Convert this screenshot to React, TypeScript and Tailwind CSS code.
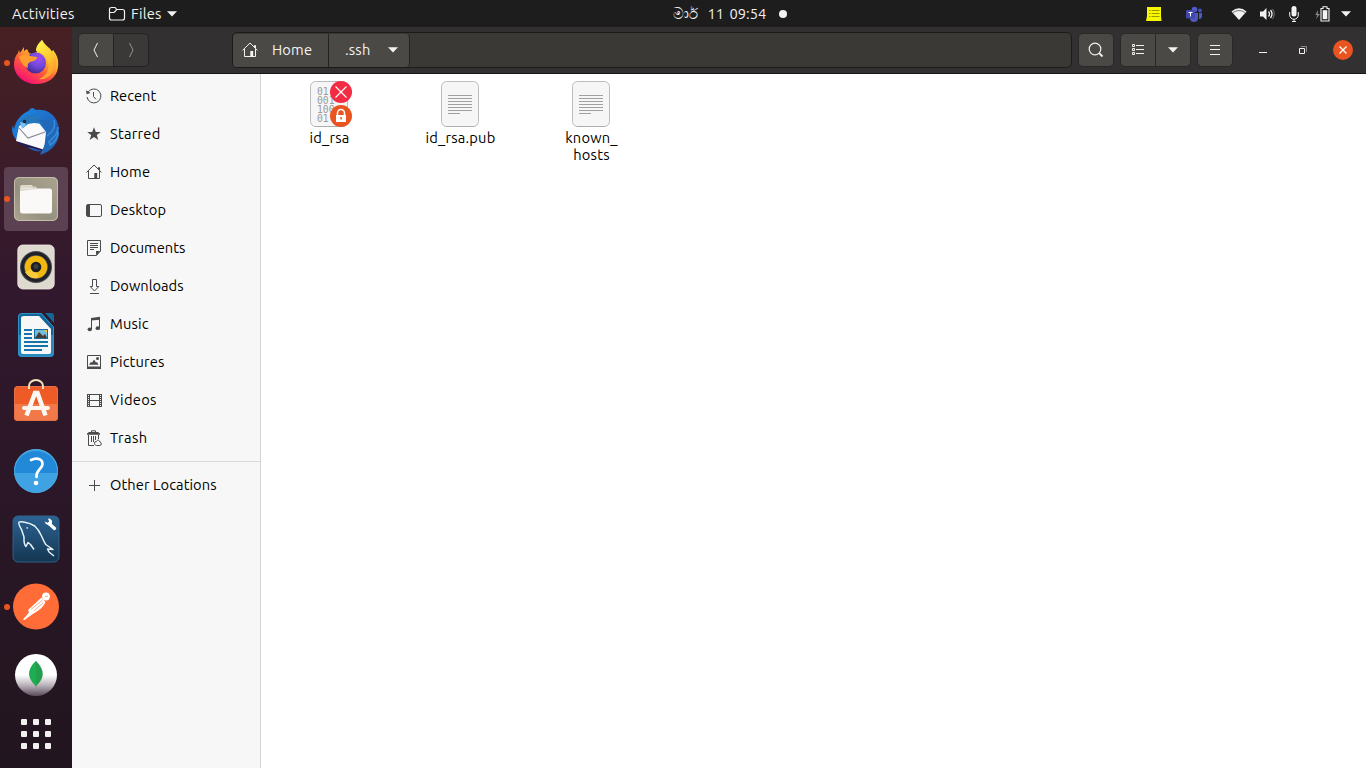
import type { ReactNode } from "react";

type IconProps = { children: ReactNode; size?: number; className?: string };

const Sym = ({ children, size = 16, className = "" }: IconProps) => (
  <svg width={size} height={size} viewBox="0 0 16 16" fill="none" stroke="currentColor" className={`block shrink-0 ${className}`}>
    {children}
  </svg>
);

const Caret = ({ className = "" }: { className?: string }) => (
  <svg width="10" height="6" viewBox="0 0 10 6" fill="currentColor" className={`block shrink-0 ${className}`}>
    <path d="M0 0.3H10L5 5.6Z" />
  </svg>
);

const HomeIcon = () => (
  <Sym>
    <path d="M0.5 8.4 8 1l7.5 7.4M2.5 7v7.5h11V7M12.5 5V3.5h1V6" />
    <path d="M8.3 9h2.9v5.5H8.3z" fill="currentColor" stroke="none" />
  </Sym>
);

const PLACES: { label: string; tracking?: string; icon: ReactNode }[] = [
  {
    label: "Recent",
    icon: (
      <Sym>
        <path d="M2 4.2A7 7 0 1 1 1 9M7.5 4v4.6l2.5 2.6" />
        <path d="M0 2.3 .6 6.2 4.6 5Z" fill="currentColor" stroke="none" />
      </Sym>
    ),
  },
  {
    label: "Starred",
    tracking: "tracking-[0.25px]",
    icon: (
      <Sym>
        <path d="M8 1.2l1.800 4.800h5L10.800 9l1.500 4.900L8 11l-4.300 2.900L5.200 9l-4-3h5z" fill="currentColor" stroke="none" />
      </Sym>
    ),
  },
  { label: "Home", tracking: "tracking-[0.15px]", icon: <HomeIcon /> },
  {
    label: "Desktop",
    tracking: "tracking-[0.15px]",
    icon: (
      <Sym>
        <rect x="0.5" y="2.500" width="15" height="12" rx="1.500" />
        <path d="M1 3h3v11H1z" fill="currentColor" stroke="none" />
      </Sym>
    ),
  },
  {
    label: "Documents",
    icon: (
      <Sym>
        <path d="M1.500 .5h13v10.500l-4 4.500h-9zM4 3.500h8M4 5.500h8M4 7.500h8M4 9.500h4" />
        <path d="M14.500 11h-4.500v4.500z" fill="currentColor" stroke="none" />
      </Sym>
    ),
  },
  {
    label: "Downloads",
    icon: (
      <Sym>
        <path d="M6.500 1.500h4v7h2.300L8.500 13 4.200 8.500h2.300zM4 15.500h9" />
      </Sym>
    ),
  },
  {
    label: "Music",
    tracking: "tracking-[0.2px]",
    icon: (
      <Sym>
        <path d="M5.500 13V3M13.500 12V2" />
        <path d="M5 2 14 .8v3L5 4.600z" fill="currentColor" stroke="none" />
        <ellipse cx="3.800" cy="13.300" rx="2.200" ry="1.900" fill="currentColor" stroke="none" />
        <ellipse cx="11.800" cy="12.200" rx="2.200" ry="1.900" fill="currentColor" stroke="none" />
      </Sym>
    ),
  },
  {
    label: "Pictures",
    tracking: "tracking-[0.15px]",
    icon: (
      <Sym>
        <path d="M1.500 1.500h13v13h-13z" />
        <path d="M1 12.500h14V15H1zM3 10.800l2-3 1 1 2-3.300 2 3 1-.5 1.500 2.800z" fill="currentColor" stroke="none" />
        <circle cx="11.500" cy="4.500" r="1.500" fill="currentColor" stroke="none" />
      </Sym>
    ),
  },
  {
    label: "Videos",
    tracking: "tracking-[0.3px]",
    icon: (
      <Sym>
        <path d="M3.500 2.500h10M3.500 14.500h10M3.500 8.500h10M3.500 2v13M13.500 2v13M1.500 2v13M15.500 2v13" />
        <path d="M2.500 2v13M14.500 2v13" strokeDasharray="1 1" />
      </Sym>
    ),
  },
  {
    label: "Trash",
    tracking: "tracking-[0.4px]",
    icon: (
      <Sym>
        <path d="M5.500 2V.8h4V2M2.500 5v10.500H8M5.500 6v6M7.500 6v6M9.500 6v4M12.500 5v4" />
        <path d="M1 4.800V3.500L3 2h9l2 1.500v1.300z" fill="currentColor" stroke="none" />
        <path d="M8.500 13a1.500 1.500 0 0 1 1.800-1.400C11 9.500 14 10 13.800 12c2 .2 2 3.500 0 3.500H10.500C9 15.500 8.500 14 8.500 13z" />
      </Sym>
    ),
  },
];

const Firefox = () => (
  <svg width="48" height="48" viewBox="0 0 48 48" className="mb-[2px]">
    <defs>
      <linearGradient id="ffb" x1=".85" y1=".1" x2=".3" y2="1">
        <stop offset="0" stopColor="#ffe94f" />
        <stop offset=".38" stopColor="#ffab2a" />
        <stop offset=".62" stopColor="#ff5b38" />
        <stop offset="1" stopColor="#f60d78" />
      </linearGradient>
      <radialGradient id="ffg" cx=".65" cy=".3" r=".75">
        <stop offset="0" stopColor="#a44af5" />
        <stop offset=".5" stopColor="#7049dc" />
        <stop offset="1" stopColor="#45278d" />
      </radialGradient>
      <linearGradient id="ffy" x1=".2" y1="0" x2=".8" y2="1">
        <stop offset="0" stopColor="#fff44f" />
        <stop offset=".55" stopColor="#ffc62f" />
        <stop offset="1" stopColor="#ff8a35" />
      </linearGradient>
    </defs>
    <path d="M30 2c2 4 5 6 8 9l2 3 1-2c4 5 6 10 5 17-1 11-11 17-22 17S2 38 2 27c0-5 1-9 4-12l1-3 1 3 4-6v4l3-2 2 4 3 1c2-1 4-2 5-2-1-5 2-9 5-12z" fill="url(#ffb)" />
    <circle cx="23.500" cy="25" r="10.500" fill="url(#ffg)" />
    <path d="M30 2c2 4 5 6 8 9l2 3 1-2c4 7 5 15 1 21-4 6-10 9-15 8 9-3 12-13 8-20-2-4-6-7-11-8 0-5 3-8 6-11z" fill="url(#ffy)" />
    <path d="M7 19c4-3 9-3 11-1l7 1c0 3-3 4-7 5-2 1-3 3-2 6-5-2-7-6-9-11z" fill="#ff9e2f" />
  </svg>
);

const Thunderbird = () => (
  <svg width="50" height="50" viewBox="0 0 50 50" className="mt-px">
    <defs>
      <linearGradient id="tb" x1="0" y1="0" x2="1" y2="1">
        <stop offset="0" stopColor="#198ee8" />
        <stop offset=".55" stopColor="#2169c3" />
        <stop offset="1" stopColor="#20479e" />
      </linearGradient>
    </defs>
    <path d="M19 3l-1-1 4-1 3 2C40 1 49 13 48 26c0 10-8 19-19 22l2-4c-7 1-11-1-16-5l5 1C7 38 1 30 1 22l1-4 1 5c1-9 7-16 16-20z" fill="url(#tb)" />
    <path d="M4 32c3 6 10 9 17 9l14 4-6-9z" fill="#241c50" />
    <path d="M8 19 16 15 28 16 35 25 34 43 5 34z" fill="#fafafc" />
    <path d="M8 21l9 10 17-6" fill="none" stroke="#88858e" strokeWidth="1.100" />
    <path d="M7 16c3-5 8-8 14-8 6 0 10 5 16 6l-5 3-9-1-6 1-5 4c-1-3-2-4-5-5z" fill="#2678bd" />
    <path d="M9 15l5 1 1 2-4 4z" fill="#77c3ee" />
    <path d="M24 13c8 1 11 7 11 14-1 8-1 13-6 20 10-2 18-10 19-21C46 17 35 10 24 13z" fill="#2268b9" />
    <path d="M47 20c-1 9-4 9-9 15l1 3c5-3 8-8 8-13M43 13c2 8-2 12-7 16" fill="none" stroke="#368fdd" strokeWidth="1.500" />
    <circle cx="13.500" cy="14.500" r="1.800" fill="#152b45" />
  </svg>
);

const FilesIcon = () => (
  <svg width="46" height="46" viewBox="0 0 46 46">
    <defs><linearGradient id="fl" x1="1" y1="0" x2="0" y2="1"><stop stopColor="#aaa48e" /><stop offset=".6" stopColor="#969080" /><stop offset="1" stopColor="#aaa48f" /></linearGradient></defs>
    <rect x="1" y="1" width="44" height="44" rx="5" fill="url(#fl)" />
    <rect x="1.500" y="1.500" width="43" height="43" rx="5" fill="none" stroke="#c3bdaa" />
    <path d="M7 15V11q0-2 2-2h10l3 4h14v4H7z" fill="#ded8cc" />
    <rect x="7" y="12.500" width="32" height="25" rx="2.500" fill="#faf9f8" />
    <path d="M7 15v-2h12l3-3 3 3z" fill="#ded8cc" />
  </svg>
);

const Rhythmbox = () => (
  <svg width="38" height="46" viewBox="0 0 38 46">
    <rect x=".8" y="1" width="36.400" height="44" rx="5" fill="#dedad0" stroke="#ece9e2" strokeWidth=".8" />
    <circle cx="19" cy="23" r="16" fill="#4a4c55" />
    <circle cx="19" cy="23" r="13.500" fill="none" stroke="#202126" strokeWidth="3" />
    <circle cx="19" cy="23" r="11.300" fill="#f1b80d" />
    <path d="M19 23 8 28A12 12 0 0 0 21 34z" fill="#f8ca39" />
    <circle cx="19" cy="23" r="5.300" fill="#1c1e22" />
    <circle cx="19" cy="22.500" r="2.500" fill="#3c3d42" />
  </svg>
);

const Writer = () => (
  <svg width="38" height="46" viewBox="0 0 38 46">
    <path d="M5 1h20l12 14v26q0 4-4 4H5q-4 0-4-4V5q0-4 4-4z" fill="#126697" />
    <path d="M1 23h36v18q0 4-4 4H5q-4 0-4-4z" fill="#268abc" />
    <path d="M5 1.500h19L36.500 15v26q0 3.500-3.500 3.500H5q-3.500 0-3.500-3.500V5q0-3.500 3.500-3.500z" fill="none" stroke="#2f92c2" />
    <path d="M28 1h6q3 0 3 3v7z" fill="#126997" />
    <path d="M7 4h15l12 13v23q0 2-2 2H6q-2 0-2-2V6q0-2 3-2z" fill="#f7f7f7" />
    <path d="M7 18h8M7 22h8M7 26h8M7 30h24M7 34h24M7 38h18" stroke="#1475a8" strokeWidth="2" />
    <rect x="17" y="17" width="14" height="10" fill="#176c9c" />
    <path d="M18 18h12v8H18z" fill="#75bbdc" />
    <path d="M18 26l4-6 4 4 2-2 2 4z" fill="#443d35" />
    <path d="M27 18h3v3z" fill="#f1c52c" />
  </svg>
);

const Software = () => (
  <svg width="46" height="46" viewBox="0 0 46 46" className="mb-[4px]">
    <path d="M1 12q0-4 4-4h36q4 0 4 4v27q0 4-4 4H5q-4 0-4-4z" fill="#ee5b26" />
    <path d="M1 26h44v13q0 4-4 4H5q-4 0-4-4z" fill="#f17848" />
    <path d="M1.500 12q0-3.500 3.500-3.500h36q3.500 0 3.500 3.500v27q0 3.500-3.500 3.500H5q-3.500 0-3.500-3.500z" fill="none" stroke="#e47147" />
    <path d="M16 11V8a7 6 0 0 1 14 0v3" fill="none" stroke="#f3e4bd" strokeWidth="2" />
    <path d="M13.500 37.500 22 15h2.500l8 22.500" fill="none" stroke="#faf8f5" strokeWidth="4.500" />
    <rect x="9" y="28" width="28" height="4" rx="2" fill="#fff5ee" />
  </svg>
);

const Help = () => (
  <svg width="46" height="46" viewBox="0 0 46 46">
    <circle cx="23" cy="23" r="22" fill="#3fa2e2" />
    <path d="M1 25a22 22 0 0 1 44 0z" fill="#2288d8" />
    <circle cx="23" cy="23" r="21.500" fill="none" stroke="#4ba7dd" strokeWidth="1" />
    <path d="M18 12c7-3.500 13 0 11 6-2 4-6 5-5.500 11" fill="none" stroke="#fff" strokeWidth="2.700" strokeLinecap="round" />
    <circle cx="23" cy="35" r="2.300" fill="white" />
  </svg>
);

const Workbench = () => (
  <svg width="48" height="48" viewBox="0 0 48 48">
    <defs><linearGradient id="wb" x2="0" y2="1"><stop stopColor="#2c6392" /><stop offset="1" stopColor="#153651" /></linearGradient></defs>
    <rect x="1" y="1" width="46" height="46" rx="5" fill="url(#wb)" stroke="#2e618a" />
    <g fill="none" stroke="#e4f3f9" strokeWidth="1.500" strokeLinejoin="round">
      <path d="M22 34.500 18.500 29.500 16 27.500 14 31.500C11.500 29.500 12 25 12 22L9.500 14.500C7.500 11 6 8.500 7 7.200 8.500 6.400 10.500 7 12.700 7.300 17 8 19.500 9 22.700 11 26 14 27.500 16.500 29 20 30.500 23 32 27 33.700 29.500L41 34.500 35.500 34 37 37 42 41" />
      <path d="M14.500 12.500l1.200 .8" />
    </g>
    <path d="M37.500 9l5 4.500" stroke="#fff" strokeWidth="3.300" strokeLinecap="round" />
    <path d="M32.500 6.500 34 9l3.500 1.500L40 8.500V5.500L37.500 3.500l-1.500.3 1.200 2.700-1.700 1.200z" fill="#fff" />
  </svg>
);

const Postman = () => (
  <svg width="48" height="48" viewBox="0 0 48 48">
    <circle cx="24" cy="23.500" r="23" fill="#ff6c37" />
    <circle cx="34" cy="13.500" r="3.900" fill="white" />
    <path d="M29.500 14.500l4 4.500c-2 5-7 9-12 11.500L12.500 37l-1.500-.5 6-7-1-2.500z" fill="white" />
    <path d="M19 26.500l11.500-9.500M22 28l9.500-8.500M33 13.500l3-.5" stroke="#ff6c37" strokeWidth=".6" fill="none" />
  </svg>
);

const Compass = () => (
  <svg width="44" height="44" viewBox="0 0 44 44">
    <defs><linearGradient id="mg" x2="0" y2="1"><stop offset=".5" stopColor="#fff" /><stop offset=".75" stopColor="#b8b1b8" /><stop offset="1" stopColor="#5b4a5b" /></linearGradient></defs>
    <circle cx="22" cy="22" r="21" fill="url(#mg)" />
    <path d="M22 30v6" stroke="#899489" strokeWidth="1" />
    <path d="M22 8c9 9 9 17 0 25-9-8-9-17 0-25z" fill="#239e4c" />
    <path d="M22 8c-9 9-9 17 0 25z" fill="#1eae52" />
  </svg>
);

const DOCK: { name: string; icon: ReactNode; running?: boolean; active?: boolean }[] = [
  { name: "Firefox", icon: <Firefox />, running: true },
  { name: "Thunderbird", icon: <Thunderbird /> },
  { name: "Files", icon: <FilesIcon />, running: true, active: true },
  { name: "Rhythmbox", icon: <Rhythmbox /> },
  { name: "Writer", icon: <Writer /> },
  { name: "Software", icon: <Software /> },
  { name: "Help", icon: <Help /> },
  { name: "Workbench", icon: <Workbench /> },
  { name: "Postman", icon: <Postman />, running: true },
  { name: "Compass", icon: <Compass /> },
];

const TopBar = () => (
  <header className="grid h-[27px] grid-cols-[1fr_auto_1fr] items-center bg-[#1d1d1d] text-[#f2f2f2]">
    <div className="flex items-center pl-3">
      <span className="w-[63px] tracking-[0.25px]">Activities</span>
      <svg width="18" height="16" viewBox="0 0 18 16" fill="none" stroke="currentColor" className="ml-[33px]">
        <path d="M1.500 13V3.500q0-2 2-2h3q1 0 1.500 1l.5 1h6q2 0 2 2V12q0 2-2 2H3.500q-2 0-2-2zM1.500 6.500H6L8.500 4" strokeWidth="1.200" />
      </svg>
      <span className="ml-[5px] w-[31px] tracking-[0.2px]">Files</span>
      <Caret className="ml-[5px]" />
    </div>
    <div className="flex items-center pl-[94px]">
      <span className="-ml-px w-[28px] whitespace-nowrap text-[14.667px]">මාර්</span>
      <span className="ml-[7px] w-[16px]">11</span>
      <span className="ml-[6px] w-[38px]">09:54</span>
      <span className="ml-[11px] size-2 rounded-full bg-[#f2f2f2]" />
    </div>
    <div className="flex items-center justify-end pr-[15px]">
      <svg width="17" height="16" viewBox="0 0 17 16" className="mr-[23px]">
        <path d="M2 1h14v9l.5 5H1l1-5z" fill="#f7f700" />
        <path d="M4 4.500h1.500M6.500 4.500h8M4 7.500h1.500M6.500 7.500h8M4 10.500h1.500M6.500 10.500h8" stroke="#98970b" />
      </svg>
      <svg width="18" height="16" viewBox="0 0 18 16" className="mr-[28px]">
        <circle cx="9.500" cy="3.500" r="2.800" fill="#5059c9" /><circle cx="15" cy="4.500" r="1.900" fill="#4750b9" />
        <path d="M5 7h8v5a4 4 0 0 1-8 0zM14 7h3v4a3 3 0 0 1-3 2z" fill="#5159bc" />
        <rect x="1" y="4" width="9" height="8.500" rx="1" fill="#4247ae" />
        <path d="M3.500 6.500h4M5.500 6.500v4" stroke="white" />
      </svg>
      <svg width="16" height="14" viewBox="0 0 16 14" className="mr-[12px]">
        <path d="M.5 4.500Q8-2 15.500 4.500L8 13z" fill="#f2f2f2" />
        <path d="M2 5.500Q8 1.500 14 5.500" fill="none" stroke="#777" />
      </svg>
      <Sym className="mr-[14px]">
        <path d="M1 5.500h3L7.500 2v12L4 10.500H1z" fill="currentColor" stroke="none" />
        <path d="M9.500 5.500q2 2.500 0 5M11.500 4q3 4 0 8" strokeWidth="1.300" />
        <path d="M13.500 3q3.500 5 0 10" stroke="#777" />
      </Sym>
      <svg width="10" height="16" viewBox="0 0 10 16" className="mr-[16px]">
        <rect x="2.500" y="0" width="5" height="10.500" rx="2.500" fill="#f2f2f2" />
        <path d="M.7 6v3a4.300 4.300 0 0 0 8.600 0V6M5 13v2.500M3 15.500h4" fill="none" stroke="#f2f2f2" />
      </svg>
      <svg width="15" height="16" viewBox="0 0 15 16" className="mr-[11px]">
        <path d="M3 4 .3 9h2L1 13l4-5H2.800z" fill="#888" />
        <path d="M8 2.500V.8h4v1.700h2v12.500H6V2.500z" fill="none" stroke="#f2f2f2" strokeWidth="1.100" />
        <path d="M7.700 4.200h4.600v9H7.700z" fill="#f2f2f2" />
      </svg>
      <Caret />
    </div>
  </header>
);

const btn = "flex items-center justify-center bg-[#4a4946] border border-[#292827] h-[34px]";

const TitleBar = () => (
  <div className="flex h-[47px] shrink-0 items-center border-b border-b-[#191818] bg-[#323031] pl-[6px] text-[#f2f2f2]">
    <div className="flex">
      <button className={`${btn} w-[36px] rounded-l-[5px]`}>
        <Sym><path d="M9.500 1 6 8l3.500 7" /></Sym>
      </button>
      <button className="-ml-px flex h-[34px] w-[36px] items-center justify-center rounded-r-[5px] border border-[#222] bg-[#3a3937] text-[#929190]">
        <Sym><path d="m6.500 1 3.500 7-3.500 7" /></Sym>
      </button>
    </div>
    <div className="ml-[83px] flex h-[36px] w-[840px] items-center rounded-[5px] border border-[#1c1b1b] bg-[#3a3936]">
      <div className="flex h-[33px] w-[96px] items-center rounded-l-[4px] border-r border-r-[#242323] bg-[#4a4946] pl-[9px]">
        <HomeIcon />
        <span className="ml-[14px] tracking-[0.15px]">Home</span>
      </div>
      <div className="flex h-[33px] w-[81px] items-center rounded-r-[4px] border-r border-r-[#242323] bg-[#4a4946] pl-[16px]">
        <span className="w-[26px] tracking-[0.2px]">.ssh</span>
        <Caret className="ml-[17px]" />
      </div>
    </div>
    <button className={`${btn} ml-[6px] w-[36px] rounded-[5px]`}>
      <Sym><circle cx="7" cy="7" r="5.800" strokeWidth="1.200" /><path d="M11.200 11.200 14.500 14.500" strokeWidth="1.800" /></Sym>
    </button>
    <button className={`${btn} ml-[6px] w-[36px] rounded-l-[5px]`}>
      <Sym><path d="M2.500 2.500h2v2h-2zM2.500 6.500h2v2h-2zM2.500 10.500h2v2h-2zM6 3.500h8M6 7.500h8M6 11.500h8" /></Sym>
    </button>
    <button className={`${btn} -ml-px w-[36px] rounded-r-[5px]`}><Caret /></button>
    <button className={`${btn} ml-[6px] w-[36px] rounded-[5px]`}>
      <Sym><path d="M3 3.500h10M3 7.500h10M3 12.500h10" /></Sym>
    </button>
    <span className="ml-[26px] mt-[4px] h-px w-2 bg-[#f2f2f2]" />
    <svg width="9" height="9" viewBox="0 0 9 9" fill="none" className="ml-[32px]">
      <path d="M2 .5h5.500V6" stroke="#8b8a89" /><path d="M.5 2.500h5v5h-5z" stroke="#f2f2f2" />
    </svg>
    <span className="ml-[25px] flex size-5 items-center justify-center rounded-full bg-[#e95420]">
      <svg width="8" height="8" viewBox="0 0 8 8" stroke="white" strokeWidth="1.300"><path d="m.5.5 7 7m0-7-7 7" /></svg>
    </span>
  </div>
);

const FileShape = ({ binary = false }: { binary?: boolean }) => (
  <svg width="38" height="47" viewBox="0 0 38 47" className="block">
    <rect x=".5" y=".5" width="37" height="45" rx="5" fill="#f6f6f6" stroke="#bcbcbc" />
    <path d="M5 45.500h28" stroke="#acacac" />
    {binary ? (
      <g fill="#9a9a9a" fontFamily="DejaVu Sans Mono" fontSize="9.700">
        <text x="7" y="13.500">01</text>
        <text x="7" y="22.500">001</text>
        <text x="7" y="31.500">100</text>
        <text x="7" y="40.500">01</text>
      </g>
    ) : (
      <path d="M7 14.500h24M7 17.500h24M7 20.500h24M7 23.500h24M7 26.500h24M7 29.500h24M7 32.500h12" stroke="#a0a0a0" />
    )}
  </svg>
);

const Emblems = () => (
  <div className="absolute left-[20px] top-0 flex flex-col gap-[2px]">
    <svg width="22" height="22" viewBox="0 0 22 22"><circle cx="11" cy="11" r="11" fill="#f22c42" /><path d="m5.500 5.500 11 11m0-11-11 11" stroke="#fff" strokeWidth="1.200" /></svg>
    <svg width="22" height="22" viewBox="0 0 22 22"><circle cx="11" cy="11" r="11" fill="#e95420" /><path d="M7.500 10V8a3.500 3.500 0 0 1 7 0v2" fill="none" stroke="#fff" strokeWidth="1.500" /><path d="M6 10h10v7H6z" fill="#fff" /><path d="M10.300 12h1.500v2.500h-1.500z" fill="#e95420" /></svg>
  </div>
);

const FileItem = ({ lines, binary }: { lines: string[]; binary?: boolean }) => (
  <div className="flex flex-col items-center">
    <div className="relative mr-px"><FileShape binary={binary} />{binary && <Emblems />}</div>
    <div className="mt-px flex flex-col items-center leading-[17px] tracking-[0.2px]">
      {lines.map((t) => <span key={t}>{t}</span>)}
    </div>
  </div>
);

export default function App() {
  return (
    <div className="flex h-[768px] w-[1366px] flex-col overflow-hidden bg-white font-['Ubuntu','Noto_Sans',sans-serif] text-[14.667px] leading-[18px] text-black">
      <TopBar />
      <div className="flex min-h-0 flex-1">
        <nav className="flex w-[72px] shrink-0 flex-col items-center gap-1 bg-linear-to-b from-[#472023] via-[#32182d] via-35% to-[#21151f] pt-1">
          {DOCK.map((d) => (
            <div key={d.name} title={d.name} className={`relative flex size-16 shrink-0 items-center justify-center rounded-[4px] ${d.active ? "bg-[#5c4152]" : ""}`}>
              {d.running && <span className="absolute left-0 top-[29px] size-[6px] rounded-full bg-[#e95420]" />}
              {d.icon}
            </div>
          ))}
          <div className="mt-[8px] grid grid-cols-3 gap-[6px]">
            {Array.from({ length: 9 }, (_, i) => <span key={i} className="size-[6px] rounded-[1px] bg-[#f2f1ef]" />)}
          </div>
        </nav>
        <section className="flex min-w-0 flex-1 flex-col">
          <TitleBar />
          <div className="flex min-h-0 flex-1">
            <aside className="w-[189px] shrink-0 border-r border-r-[#d5d5d5] bg-[#f7f7f7] pt-[3px]">
              {PLACES.map((p) => (
                <div key={p.label} className="flex h-[38px] items-center pl-[14px]">
                  <span className="text-[#4a4a4a]">{p.icon}</span>
                  <span className={`ml-2 ${p.tracking ?? ""}`}>{p.label}</span>
                </div>
              ))}
              <div className="my-1 h-px bg-[#d9d9d9]" />
              <div className="flex h-[38px] items-center pl-[14px]">
                <Sym className="text-[#4a4a4a]"><path d="M3 8.500h11M8.500 3v11" /></Sym>
                <span className="ml-2 whitespace-nowrap tracking-[0.08px]">Other Locations</span>
              </div>
            </aside>
            <main className="grid flex-1 auto-rows-min grid-cols-[131px_131px_131px] bg-white pl-[3px] pt-[7px]">
              <FileItem lines={["id_rsa"]} binary />
              <FileItem lines={["id_rsa.pub"]} />
              <FileItem lines={["known_", "hosts"]} />
            </main>
          </div>
        </section>
      </div>
    </div>
  );
}
